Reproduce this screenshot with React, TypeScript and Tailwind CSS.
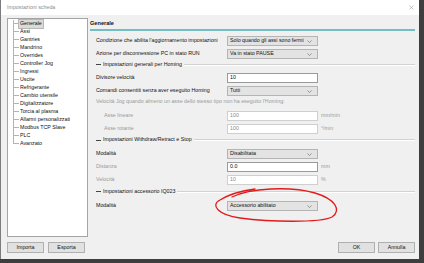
import type { ReactNode } from "react";

const treeItems = [
  "Generale",
  "Assi",
  "Gantries",
  "Mandrino",
  "Overrides",
  "Controller Jog",
  "Ingressi",
  "Uscite",
  "Refrigerante",
  "Cambio utensile",
  "Digitalizzatore",
  "Torcia al plasma",
  "Allarmi personalizzati",
  "Modbus TCP Slave",
  "PLC",
  "Avanzato",
];

function Chevron() {
  return (
    <svg width="5" height="3" viewBox="0 0 5 3" className="shrink-0">
      <polyline points="0.5,0.5 2.5,2.5 4.5,0.5" fill="none" stroke="#707070" strokeWidth="0.7" />
    </svg>
  );
}

function Select({ value }: { value: string }) {
  return (
    <div className="flex h-[10px] w-[91px] items-center justify-between border border-[#b4b4b4] bg-[#e3e3e3] pl-[2px] pr-[5px] text-[#111]">
      <span>{value}</span>
      <Chevron />
    </div>
  );
}

function Input({ value, disabled }: { value: string; disabled?: boolean }) {
  return (
    <div
      className={`flex h-[10px] w-[91px] items-center border bg-white pl-[2px] ${
        disabled ? "border-[#cfcfcf] text-[#8a8a8a]" : "border-[#9a9a9a] text-[#111]"
      }`}
    >
      {value}
    </div>
  );
}

function Row({
  label,
  children,
  unit,
  muted,
  indent,
}: {
  label: string;
  children: ReactNode;
  unit?: string;
  muted?: boolean;
  indent?: boolean;
}) {
  return (
    <div className="mb-[3px] flex h-[10px] items-center">
      <span
        className={`w-[131px] shrink-0 whitespace-nowrap ${indent ? "pl-[8px]" : ""} ${
          muted ? "text-[#9a9a9a]" : "text-[#111]"
        }`}
      >
        {label}
      </span>
      {children}
      {unit ? (
        <span className={`ml-[3px] ${muted ? "text-[#9a9a9a]" : "text-[#111]"}`}>{unit}</span>
      ) : null}
    </div>
  );
}

function Section({ title, h }: { title: string; h: string }) {
  return (
    <div className={`flex items-center ${h}`}>
      <span className="h-[1px] w-[5px] shrink-0 bg-[#444]" />
      <span className="px-[2px] text-[#111]">{title}</span>
      <span className="h-[2px] flex-1 border-t border-b border-t-[#d2d2d2] border-b-white" />
    </div>
  );
}

function Button({ children }: { children: ReactNode }) {
  return (
    <div className="flex h-[11px] w-[37px] items-center justify-center border border-[#b0b0b0] bg-[#e1e1e1] text-[#111]">
      {children}
    </div>
  );
}

export default function App() {
  return (
    <div className="relative h-[263px] w-[424px] overflow-hidden bg-[#3e3e3e] font-['Liberation_Sans',Arial,sans-serif] text-[5.3px] leading-none">
      <div className="flex h-[259px] w-[419px] flex-col border-l border-[#7c7c7c] bg-[#f0f0f0]">
        <div className="flex h-[15px] items-center justify-between bg-white pl-[6px] pr-[5px]">
          <span className="text-[#8c8c8c]">Impostazioni scheda</span>
          <svg width="5" height="5" viewBox="0 0 5 5">
            <path d="M0.5 0.5 L4.5 4.5 M4.5 0.5 L0.5 4.5" stroke="#9a9a9a" strokeWidth="0.6" />
          </svg>
        </div>

        <div className="flex flex-1 flex-col pl-[6px] pr-[4px] pt-[3px]">
          <div className="flex h-[219px]">
            <div className="h-full w-[81px] shrink-0 border border-[#a4a4a4] bg-white pl-[5px] pt-[1px]">
              {treeItems.map((item, i) => {
                const last = i === treeItems.length - 1;
                return (
                  <div key={item} className="flex h-[8px] items-stretch">
                    <div className="flex w-[6px] shrink-0 flex-col">
                      <div className="h-[4px] border-l border-b border-[#b4b4b4]" />
                      <div className={`h-[4px] ${last ? "" : "border-l border-[#b4b4b4]"}`} />
                    </div>
                    <div className="flex items-center">
                      <span
                        className={`whitespace-nowrap px-[1px] py-[1px] text-[#111] ${
                          i === 0 ? "bg-[#dadada] outline outline-[0.5px] outline-[#b8b8b8]" : ""
                        }`}
                      >
                        {item}
                      </span>
                    </div>
                  </div>
                );
              })}
            </div>

            <div className="ml-[2px] flex flex-1 flex-col">
              <div className="flex h-[11px] items-center text-[5.6px] font-bold text-[#111]">
                Generale
              </div>
              <div className="h-[2px] bg-[#74bdc1]" />
              <div className="mt-[5px] flex flex-col pl-[6px]">
                <Row label="Condizione che abilita l'aggiornamento impostazioni">
                  <Select value="Solo quando gli assi sono fermi" />
                </Row>
                <Row label="Azione per disconnessione PC in stato RUN">
                  <Select value="Va in stato PAUSE" />
                </Row>
                <Section title="Impostazioni generali per Homing" h="h-[11px] -mt-[3px] mb-[3px]" />
                <Row label="Divisore velocità">
                  <Input value="10" />
                </Row>
                <Row label="Comandi consentiti senza aver eseguito Homing">
                  <Select value="Tutti" />
                </Row>
                <div className="-mt-[3px] mb-[3px] flex h-[12px] items-center whitespace-nowrap text-[#9a9a9a]">
                  Velocità Jog quando almeno un asse dello stesso tipo non ha eseguito l'Homing:
                </div>
                <Row label="Asse lineare" unit="mm/min" muted indent>
                  <Input value="100" disabled />
                </Row>
                <Row label="Asse rotante" unit="°/min" muted indent>
                  <Input value="100" disabled />
                </Row>
                <Section title="Impostazioni Withdraw/Retract e Stop" h="h-[12px] -mt-[3px] mb-[3px]" />
                <Row label="Modalità">
                  <Select value="Disabilitata" />
                </Row>
                <Row label="Distanza" unit="mm" muted>
                  <Input value="0.0" />
                </Row>
                <Row label="Velocità" unit="%" muted>
                  <Input value="10" disabled />
                </Row>
                <Section title="Impostazioni accessorio IQ023" h="h-[13px] -mt-[3px] mb-[3px]" />
                <Row label="Modalità">
                  <Select value="Accessorio abilitato" />
                </Row>
              </div>
            </div>
          </div>

          <div className="mt-[5px] flex justify-between">
            <div className="flex gap-[4px]">
              <Button>Importa</Button>
              <Button>Esporta</Button>
            </div>
            <div className="flex gap-[3px]">
              <Button>OK</Button>
              <Button>Annulla</Button>
            </div>
          </div>
        </div>
      </div>

      <svg
        className="pointer-events-none absolute left-0 top-0"
        width="424"
        height="263"
        viewBox="0 0 424 263"
      >
        <path
          d="M232 197 C250 188, 290 186, 315 193 C335 199, 342 210, 332 217 C320 223, 270 222, 240 218 C218 215, 210 205, 220 200 C228 195, 240 191, 255 189"
          fill="none"
          stroke="#e11b1b"
          strokeWidth="1.3"
          strokeLinecap="round"
        />
      </svg>
    </div>
  );
}
